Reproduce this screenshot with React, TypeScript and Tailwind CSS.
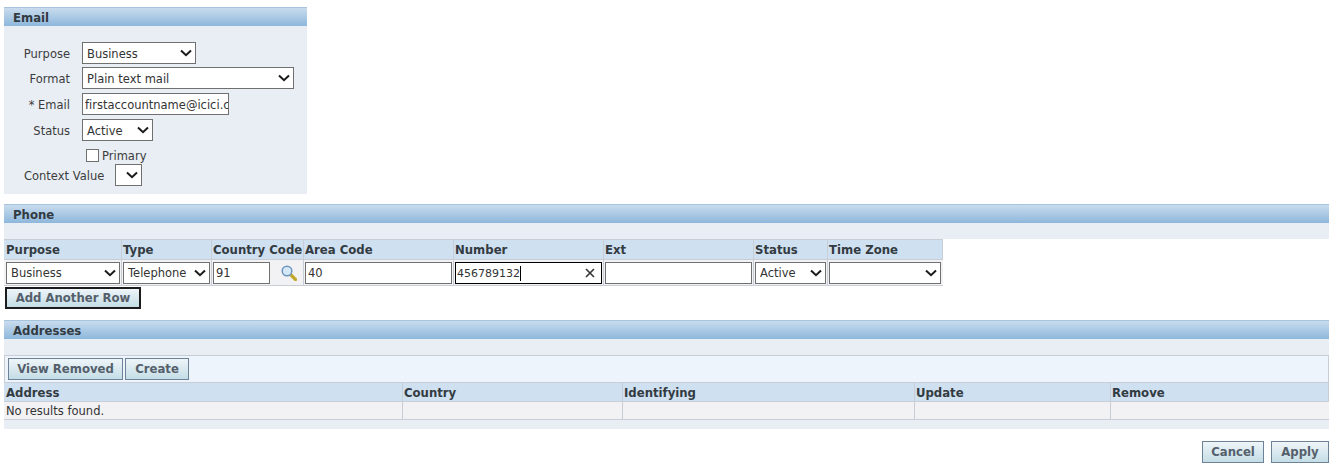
import React from 'react';

const FONT = "font-['DejaVu_Sans',sans-serif] [font-variant-ligatures:none]";

function Chevron() {
  return (
    <svg width="12" height="8" viewBox="0 0 12 8" className="shrink-0">
      <path d="M1 1.5 L6 6.2 L11 1.5" fill="none" stroke="#1a1a1a" strokeWidth="2" />
    </svg>
  );
}

function Select({ value, className }: { value?: string; className: string }) {
  return (
    <div className={`flex h-[22px] items-center justify-between border border-[#707070] bg-white pl-[4px] pr-[3px] text-[#333333] ${className}`}>
      <span className="whitespace-nowrap pt-[1px] leading-[14px]">{value}</span>
      <Chevron />
    </div>
  );
}

function Input({ value, className }: { value?: string; className: string }) {
  return (
    <input
      readOnly
      value={value ?? ''}
      className={`h-[22px] border border-[#707070] bg-white pl-[2px] pt-[1px] text-[#333333] outline-none ${className}`}
    />
  );
}

function SectionHeader({ title }: { title: string }) {
  return (
    <div className="flex h-[19px] items-center border-t border-[#a6c4de] bg-gradient-to-b from-[#c9dcee] to-[#8db7db] pl-[9px] pt-[3px] text-[11.7px] font-bold text-[#333b42]">
      {title}
    </div>
  );
}

function Button({ label, className }: { label: string; className: string }) {
  return (
    <div className={`flex h-[22px] items-center justify-center bg-gradient-to-b from-[#eef5f9] to-[#c4dde5] pt-[2px] text-[11.7px] font-bold text-[#555f6b] ${className}`}>
      {label}
    </div>
  );
}

function FormRow({ label, children, className }: { label: string; children: React.ReactNode; className?: string }) {
  return (
    <div className={`flex items-center ${className ?? ''}`}>
      <div className="w-[66px] pt-[3px] text-right text-[#3c3c3c]">{label}</div>
      {children}
    </div>
  );
}

const phoneCols = ['Purpose', 'Type', 'Country Code', 'Area Code', 'Number', 'Ext', 'Status', 'Time Zone'];
const addressCols = ['Address', 'Country', 'Identifying', 'Update', 'Remove'];

const cellBorder = 'border-r border-[#c9ced6] last:border-r-0';

export default function App() {
  return (
    <div className={`${FONT} h-[469px] w-[1332px] overflow-hidden bg-white text-[11.5px] leading-none`}>
      <div className="pl-[4px] pr-[3px] pt-[7px]">
        {/* Email */}
        <div className="w-[303px] bg-[#e9eef5]">
          <SectionHeader title="Email" />
          <div className="flex h-[168px] flex-col pt-[16px]">
            <FormRow label="Purpose">
              <Select value="Business" className="ml-[12px] w-[114px]" />
            </FormRow>
            <FormRow label="Format" className="mt-[3px]">
              <Select value="Plain text mail" className="ml-[12px] w-[212px]" />
            </FormRow>
            <FormRow label="* Email" className="mt-[4px]">
              <Input value="firstaccountname@icici.com" className="ml-[12px] w-[147px]" />
            </FormRow>
            <FormRow label="Status" className="mt-[4px]">
              <Select value="Active" className="ml-[12px] w-[71px]" />
            </FormRow>
            <div className="ml-[82px] mt-[8px] flex h-[13px] items-center gap-[3px] text-[#3c3c3c]">
              <div className="h-[13px] w-[13px] border border-[#707070] bg-white" />
              <span className="pt-[2px]">Primary</span>
            </div>
            <div className="ml-[20px] mt-[2px] flex items-center gap-[11px] text-[#3c3c3c]">
              <span className="pt-[3px]">Context Value</span>
              <Select className="w-[27px]" />
            </div>
          </div>
        </div>

        {/* Phone */}
        <div className="mt-[10px]">
          <SectionHeader title="Phone" />
          <div className="h-[16px] bg-[#e9eef5]" />
          <div className="grid w-[939px] grid-cols-[118px_90px_92px_150px_150px_150px_74px_115px]">
            {phoneCols.map((c, i) => (
              <div key={c} className={`flex h-[20px] items-center whitespace-nowrap border-t border-[#c9ced6] bg-[#cfe0f0] pt-[2px] text-[11.7px] font-bold text-[#333b42] ${i === 0 ? 'pl-[2px]' : 'pl-[1px]'} ${cellBorder}`}>
                {c}
              </div>
            ))}
            <Cell><Select value="Business" className="ml-[1px] w-[114px]" /></Cell>
            <Cell><Select value="Telephone" className="w-[87px]" /></Cell>
            <Cell>
              <Input value="91" className="w-[57px]" />
              <svg width="16" height="16" viewBox="0 0 16 16" className="ml-[11px] shrink-0">
                <path d="M9.5 9.5 L14.5 14.5" stroke="#c2a82a" strokeWidth="3.2" strokeLinecap="round" />
                <circle cx="6" cy="6" r="4.8" fill="#d5e8f8" stroke="#6f95bf" strokeWidth="1.5" />
              </svg>
            </Cell>
            <Cell><Input value="40" className="w-[147px]" /></Cell>
            <Cell>
              <div className="relative flex h-[22px] w-[147px] items-center border border-black bg-white pl-[1px] pt-[1px] text-[11px] text-[#333333]">
                <span>456789132</span>
                <span className="h-[15px] w-px bg-black" />
                <svg width="10" height="10" viewBox="0 0 10 10" className="absolute right-[6px] top-[5px]">
                  <path d="M1 1 L9 9 M9 1 L1 9" stroke="#333333" strokeWidth="1.6" />
                </svg>
              </div>
            </Cell>
            <Cell><Input className="w-[147px]" /></Cell>
            <Cell><Select value="Active" className="w-[71px]" /></Cell>
            <Cell><Select className="w-[112px]" /></Cell>
          </div>
          <Button label="Add Another Row" className="ml-[1px] mt-[1px] w-[136px] border-2 border-[#1c1c1c]" />
        </div>

        {/* Addresses */}
        <div className="mt-[11px]">
          <SectionHeader title="Addresses" />
          <div className="h-[16px] bg-[#e9eef5]" />
          <div className="flex h-[27px] items-center gap-[2px] border-x border-t border-[#c9ced6] bg-[#edf4fc] pl-[3px]">
            <Button label="View Removed" className="w-[115px] border border-[#6d8296]" />
            <Button label="Create" className="w-[64px] border border-[#6d8296]" />
          </div>
          <div className="grid grid-cols-[399px_220px_292px_196px_218px]">
            {addressCols.map((c, i) => (
              <div key={c} className={`flex h-[20px] items-center border-y border-[#c9ced6] bg-[#cfe0f0] pt-[3px] text-[11.7px] font-bold text-[#333b42] ${i === 0 ? 'pl-[2px]' : 'pl-[1px]'} ${cellBorder}`}>
                {c}
              </div>
            ))}
            {addressCols.map((c, i) => (
              <div key={c} className={`flex h-[18px] items-center border-b border-[#c9ced6] bg-[#f2f2f5] pl-[2px] pt-[3px] text-[#333333] ${cellBorder}`}>
                {i === 0 ? 'No results found.' : ''}
              </div>
            ))}
          </div>
          <div className="h-[9px] bg-[#e9eef5]" />
        </div>

        <div className="mt-[12px] flex justify-end gap-[7px]">
          <Button label="Cancel" className="w-[62px] border border-[#6d8296]" />
          <Button label="Apply" className="w-[58px] border border-[#6d8296]" />
        </div>
      </div>
    </div>
  );
}

function Cell({ children }: { children: React.ReactNode }) {
  return (
    <div className={`flex h-[27px] items-center border-y border-[#c9ced6] bg-[#f2f2f5] pl-[1px] ${cellBorder}`}>
      {children}
    </div>
  );
}
